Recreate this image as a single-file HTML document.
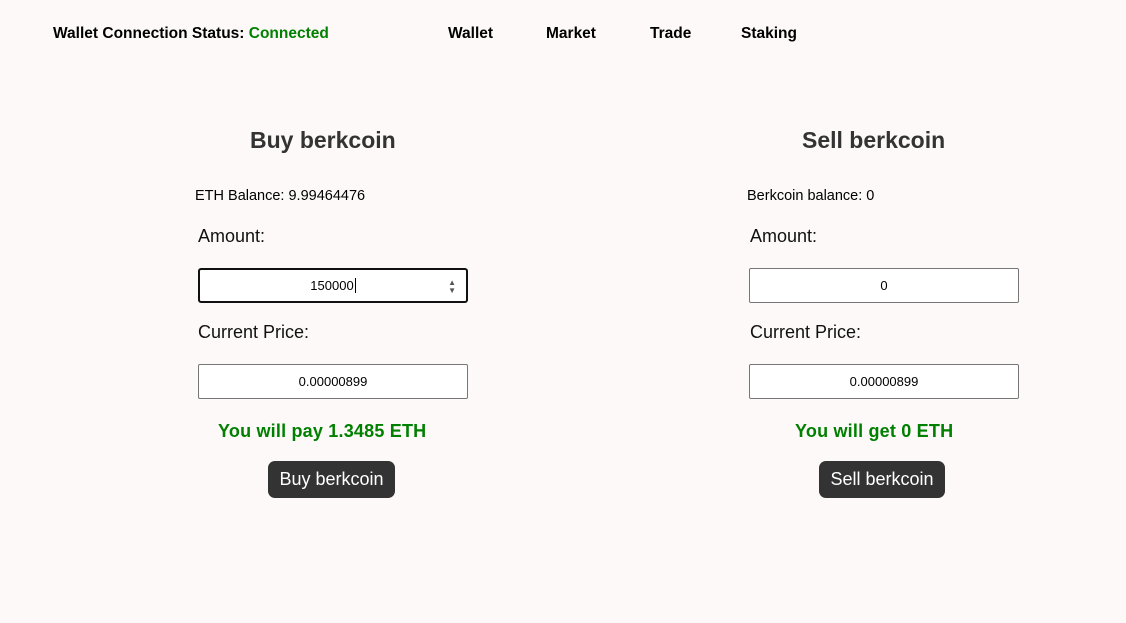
<!DOCTYPE html>
<html><head><meta charset="utf-8"><style>
body{margin:0;width:1126px;height:623px;background:#fdf9f8;font-family:"Liberation Sans",sans-serif;color:#000;position:relative;overflow:hidden}
.a{position:absolute;white-space:nowrap}
.nav{font-weight:bold;font-size:15.5px;top:25px}
h2{position:absolute;margin:0;font-size:23px;font-weight:bold;color:#333;top:127px}
.lbl{font-size:18px;color:#111}
.inp{position:absolute;width:270px;height:35px;box-sizing:border-box;border:1px solid #767676;background:#fff;border-radius:2px;font-size:13px;text-align:center;line-height:33px}
.green{color:#008000;font-weight:bold;font-size:18px;letter-spacing:0.2px}
.btn{position:absolute;background:#333;color:#fff;font-size:18px;border-radius:7px;height:37px;line-height:37px;text-align:center}
</style></head><body>
<div class="a nav" style="left:53px">Wallet Connection Status: <span style="color:#008000">Connected</span></div>
<div class="a nav" style="left:448px">Wallet</div>
<div class="a nav" style="left:546px">Market</div>
<div class="a nav" style="left:650px">Trade</div>
<div class="a nav" style="left:741px">Staking</div>

<h2 style="left:250px">Buy berkcoin</h2>
<div class="a" style="left:195px;top:188px;font-size:14.5px">ETH Balance: 9.99464476</div>
<div class="a lbl" style="left:198px;top:226px">Amount:</div>
<div class="inp" style="left:198px;top:268px;border:2px solid #111;border-radius:3px;line-height:31px">150000<span style="border-left:1px solid #000;margin-left:1px"></span><span style="position:absolute;right:10px;top:0;font-size:8px;color:#555;line-height:8px;padding-top:9px">▲<br>▼</span></div>
<div class="a lbl" style="left:198px;top:322px">Current Price:</div>
<div class="inp" style="left:198px;top:364px">0.00000899</div>
<div class="a green" style="left:218px;top:421px">You will pay 1.3485 ETH</div>
<div class="btn" style="left:268px;top:461px;width:127px">Buy berkcoin</div>

<h2 style="left:802px">Sell berkcoin</h2>
<div class="a" style="left:747px;top:188px;font-size:14.5px">Berkcoin balance: 0</div>
<div class="a lbl" style="left:750px;top:226px">Amount:</div>
<div class="inp" style="left:749px;top:268px">0</div>
<div class="a lbl" style="left:750px;top:322px">Current Price:</div>
<div class="inp" style="left:749px;top:364px">0.00000899</div>
<div class="a green" style="left:795px;top:421px">You will get 0 ETH</div>
<div class="btn" style="left:819px;top:461px;width:126px">Sell berkcoin</div>
</body></html>
